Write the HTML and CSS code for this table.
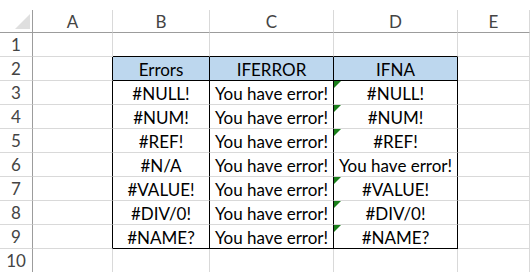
FILE: index.html
```html
<!DOCTYPE html>
<html>
<head>
<meta charset="utf-8">
<link rel="stylesheet" href="styles.css">
</head>
<body>
<div class="sheet">
  <div class="cell corner"><span class="tri"></span></div>
  <div class="cell colhead">A</div>
  <div class="cell colhead">B</div>
  <div class="cell colhead">C</div>
  <div class="cell colhead">D</div>
  <div class="cell colhead">E</div>

  <div class="cell rowhead">1</div>
  <div class="cell"></div>
  <div class="cell b-bot"></div>
  <div class="cell b-bot"></div>
  <div class="cell b-bot"></div>
  <div class="cell"></div>

  <div class="cell rowhead">2</div>
  <div class="cell b-right"></div>
  <div class="cell t head b-bot b-right">Errors</div>
  <div class="cell t head b-bot b-right">IFERROR</div>
  <div class="cell t head b-bot b-right">IFNA</div>
  <div class="cell"></div>

  <div class="cell rowhead">3</div>
  <div class="cell b-right"></div>
  <div class="cell t b-right">#NULL!</div>
  <div class="cell t b-right">You have error!</div>
  <div class="cell t b-right flag">#NULL!</div>
  <div class="cell"></div>

  <div class="cell rowhead">4</div>
  <div class="cell b-right"></div>
  <div class="cell t b-right">#NUM!</div>
  <div class="cell t b-right">You have error!</div>
  <div class="cell t b-right flag">#NUM!</div>
  <div class="cell"></div>

  <div class="cell rowhead">5</div>
  <div class="cell b-right"></div>
  <div class="cell t b-right">#REF!</div>
  <div class="cell t b-right">You have error!</div>
  <div class="cell t b-right flag">#REF!</div>
  <div class="cell"></div>

  <div class="cell rowhead">6</div>
  <div class="cell b-right"></div>
  <div class="cell t b-right">#N/A</div>
  <div class="cell t b-right">You have error!</div>
  <div class="cell t b-right">You have error!</div>
  <div class="cell"></div>

  <div class="cell rowhead">7</div>
  <div class="cell b-right"></div>
  <div class="cell t b-right">#VALUE!</div>
  <div class="cell t b-right">You have error!</div>
  <div class="cell t b-right flag">#VALUE!</div>
  <div class="cell"></div>

  <div class="cell rowhead">8</div>
  <div class="cell b-right"></div>
  <div class="cell t b-right">#DIV/0!</div>
  <div class="cell t b-right">You have error!</div>
  <div class="cell t b-right flag">#DIV/0!</div>
  <div class="cell"></div>

  <div class="cell rowhead">9</div>
  <div class="cell b-right"></div>
  <div class="cell t b-right b-bot">#NAME?</div>
  <div class="cell t b-right b-bot">You have error!</div>
  <div class="cell t b-right b-bot flag">#NAME?</div>
  <div class="cell"></div>

  <div class="cell rowhead">10</div>
  <div class="cell"></div>
  <div class="cell"></div>
  <div class="cell"></div>
  <div class="cell"></div>
  <div class="cell"></div>
</div>
</body>
</html>
```
FILE: styles.css
```css
html, body {
  margin: 0;
  padding: 0;
  background: #ffffff;
}

.sheet {
  padding-top: 10px;
  display: grid;
  grid-template-columns: 33px 80px 97px 124px 124px 1fr;
  grid-template-rows: 23px repeat(10, 24px);
  font-family: Lato, "Liberation Sans", sans-serif;
  font-size: 17px;
  color: #000;
}

.cell {
  box-sizing: border-box;
  border-right: 1px solid #d9d9d9;
  border-bottom: 1px solid #d9d9d9;
  display: flex;
  align-items: center;
  justify-content: center;
  white-space: nowrap;
  overflow: hidden;
  position: relative;
  line-height: 1;
}

.corner {
  border-right-color: #9c9c9c;
  border-bottom-color: #9c9c9c;
  justify-content: flex-end;
  align-items: flex-end;
  padding: 0 2px 3px 0;
}

.tri {
  width: 15px;
  height: 15px;
  background: #dfdfdf;
  clip-path: polygon(100% 0, 100% 100%, 0 100%);
}

.colhead {
  border-bottom-color: #9c9c9c;
  color: #444;
}

.rowhead {
  border-right-color: #9c9c9c;
  color: #444;
}

.b-right {
  border-right-color: #000;
}

.b-bot {
  border-bottom-color: #000;
}

.head {
  background: #bdd7ee;
}

.t {
  padding-top: 1px;
}

.flag::before {
  content: "";
  position: absolute;
  left: 0;
  top: 0;
  width: 7px;
  height: 7px;
  background: #1a7f1a;
  clip-path: polygon(0 0, 100% 0, 0 100%);
}
```
